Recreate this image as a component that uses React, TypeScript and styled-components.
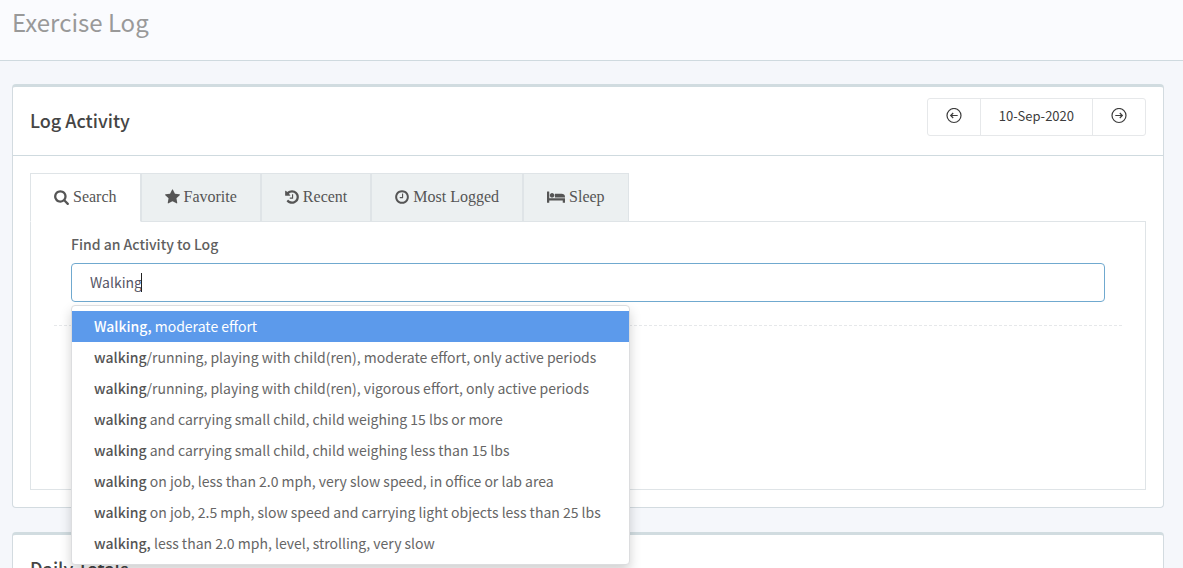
import React from "react";
import styled, { createGlobalStyle, css } from "styled-components";

const sans = `"Source Sans Pro", "Noto Sans CJK SC", sans-serif`;
const serif = `"Liberation Serif", "Times New Roman", serif`;

const GlobalStyle = createGlobalStyle`
  *, *::before, *::after { box-sizing: border-box; }
  html, body { height: 100%; overflow: hidden; }
  body {
    margin: 0;
    background: #f5f7fb;
    color: #646464;
    font-family: ${sans};
    font-size: 14px;
    line-height: 20px;
  }
`;

const PageHeader = styled.header`
  padding: 4px 12px 20px;
  background: #fafbfe;
  border-bottom: 1px solid #cfdadf;
`;

const PageTitle = styled.h1`
  margin: 0;
  color: #999;
  font-size: 24px;
  font-weight: 400;
  line-height: 36px;
`;

const Main = styled.main`
  display: flex;
  flex-direction: column;
  gap: 24px;
  padding: 23px 19px 23px 12px;
`;

const Panel = styled.section`
  background: #fff;
  border: 1px solid #d3dbe0;
  border-top: 3px solid #d1dce0;
  border-radius: 4px;
`;

const PanelHeader = styled.div`
  display: flex;
  justify-content: space-between;
  align-items: flex-start;
  min-height: 69px;
  padding: 11px 17px;
  border-bottom: 1px solid #cfdadf;
`;

const PanelTitle = styled.h2`
  margin: 0;
  color: #454545;
  font-size: 18px;
  font-weight: 500;
  line-height: 44px;
`;

const PanelBody = styled.div`
  padding: 17px;
`;

const DateGroup = styled.div`
  display: flex;
  height: 38px;
  border: 1px solid #e6e8ea;
  border-radius: 3px;
`;

const DateButton = styled.button`
  display: flex;
  align-items: center;
  justify-content: center;
  padding: 0 18px 2px;
  border: 0;
  background: none;
  color: #3c3c3c;
  font-family: ${sans};
  font-size: 13px;
  line-height: 20px;
  & + & { border-left: 1px solid #e6e8ea; }
`;

const TabList = styled.div`
  display: flex;
  margin-bottom: -1px;
`;

const Tab = styled.button<{ $active?: boolean }>`
  display: flex;
  align-items: center;
  gap: 4px;
  height: 49px;
  padding: 0 23px 2px;
  border: 1px solid #dfe4e7;
  background: #ecf0f1;
  color: #555;
  font-family: ${serif};
  font-size: 16px;
  line-height: 20px;
  white-space: nowrap;
  ${(p) =>
    p.$active &&
    css`
      background: #fff;
      border-bottom-color: #fff;
    `}
`;

const TabPanel = styled.div`
  min-height: 269px;
  padding: 12px 23px;
  border: 1px solid #dfe4e7;
`;

const SearchForm = styled.form`
  position: relative;
  margin: 0;
  padding: 0 17px 23px;
  border-bottom: 1px dashed #e6e8ea;
`;

const Label = styled.label`
  display: block;
  margin-bottom: 9px;
  color: #606060;
  font-size: 14px;
  font-weight: 500;
  line-height: 20px;
`;

const Field = styled.div`
  position: relative;
`;

const SearchInput = styled.input`
  display: block;
  width: 100%;
  height: 39px;
  padding: 0 18px 2px;
  border: 1px solid #70a9cf;
  border-radius: 4px;
  outline: 0;
  background: #fff;
  color: #555566;
  font-family: ${sans};
  font-size: 14px;
`;

const Caret = styled.span`
  position: absolute;
  top: 10px;
  left: 70px;
  width: 1px;
  height: 19px;
  background: #222;
`;

const Menu = styled.ul`
  position: absolute;
  z-index: 2;
  top: 100%;
  left: 0;
  min-width: 559px;
  margin: 3px 0 0;
  padding: 5px 0;
  border: 1px solid #dcdddf;
  border-radius: 4px;
  background: #fff;
  box-shadow: 0 6px 12px rgba(0, 0, 0, 0.18);
  list-style: none;
`;

const Option = styled.li<{ $active?: boolean }>`
  padding: 4px 22px;
  color: ${(p) => (p.$active ? "#fff" : "#666")};
  background: ${(p) => (p.$active ? "#5c9aeb" : "none")};
  line-height: 23px;
  white-space: nowrap;
  b { font-weight: 500; color: ${(p) => (p.$active ? "#fff" : "#555")}; }
`;

type GlyphProps = { width: number; box: string; d: string };

const Glyph = ({ width, box, d }: GlyphProps) => (
  <svg width={width} height="16" viewBox={box} fill="currentColor" aria-hidden="true">
    <path d={d} />
  </svg>
);

const CircleArrow = ({ back }: { back?: boolean }) => (
  <svg width="16" height="16" viewBox="0 0 16 16" fill="none" stroke="currentColor" aria-hidden="true">
    <circle cx="8" cy="7.5" r="7" strokeWidth="1.2" />
    <path
      strokeWidth="1.2"
      d={back ? "M11.7 7.5H4.8M7.2 5L4.7 7.5l2.5 2.5" : "M4.3 7.5h6.9M8.8 5l2.5 2.5-2.5 2.5"}
    />
  </svg>
);

const tabs = [
  {
    label: "Search",
    width: 15,
    box: "64 0 1664 1792",
    d: "M1216 832q0-185-131.5-316.5t-316.5-131.5-316.5 131.5-131.5 316.5 131.5 316.5 316.5 131.5 316.5-131.5 131.5-316.5zm512 832q0 52-38 90t-90 38q-54 0-90-38l-343-342q-179 124-399 124-143 0-273.5-55.5t-225-150-150-225-55.5-273.5 55.5-273.5 150-225 225-150 273.5-55.5 273.5 55.5 225 150 150 225 55.5 273.5q0 220-124 399l343 343q37 37 37 90z",
  },
  {
    label: "Favorite",
    width: 15,
    box: "64 0 1664 1792",
    d: "M1728 647q0 22-26 48l-363 354 86 500q1 7 1 20 0 21-10.5 35.5t-30.5 14.5q-19 0-40-12l-449-236-449 236q-22 12-40 12-21 0-31.5-14.5t-10.5-35.5q0-6 2-20l86-500-364-354q-25-27-25-48 0-37 56-46l502-73 225-455q19-41 49-41t49 41l225 455 502 73q56 9 56 46z",
  },
  {
    label: "Recent",
    width: 14,
    box: "128 0 1536 1792",
    d: "M1664 896q0 156-61 298t-164 245-245 164-298 61q-172 0-327-72.5t-264-204.5q-7-10-6.5-22.5t8.5-20.5l137-138q10-9 25-9 16 2 23 12 73 95 179 147t225 52q104 0 198.5-40.5t163.5-109.5 109.5-163.5 40.5-198.5-40.5-198.5-109.5-163.5-163.5-109.5-198.5-40.5q-98 0-188 35.5t-160 101.5l137 138q31 30 14 69-17 40-59 40h-448q-26 0-45-19t-19-45v-448q0-42 40-59 39-17 69 14l130 129q107-101 244.5-156.5t284.5-55.5q156 0 298 61t245 164 164 245 61 298zm-640-288v448q0 14-9 23t-23 9h-320q-14 0-23-9t-9-23v-64q0-14 9-23t23-9h224v-352q0-14 9-23t23-9h64q14 0 23 9t9 23z",
  },
  {
    label: "Most Logged",
    width: 14,
    box: "128 0 1536 1792",
    d: "M1024 544v448q0 14-9 23t-23 9h-320q-14 0-23-9t-9-23v-64q0-14 9-23t23-9h224v-352q0-14 9-23t23-9h64q14 0 23 9t9 23zm416 352q0-148-73-273t-198-198-273-73-273 73-198 198-73 273 73 273 198 198 273 73 273-73 198-198 73-273zm224 0q0 209-103 385.5t-279.5 279.5-385.5 103-385.5-103-279.5-279.5-103-385.5 103-385.5 279.5-279.5 385.5-103 385.5 103 279.5 279.5 103 385.5z",
  },
  {
    label: "Sleep",
    width: 18,
    box: "0 0 2048 1792",
    d: "M256 1024h1728q26 0 45 19t19 45v448h-256v-256h-1536v256h-256v-1216q0-26 19-45t45-19h128q26 0 45 19t19 45v704zm576-320q0-106-75-181t-181-75-181 75-75 181 75 181 181 75 181-75 75-181zm1216 256v-64q0-159-112.5-271.5t-271.5-112.5h-704q-26 0-45 19t-19 45v384h1152z",
  },
];

const options: [string, string][] = [
  ["Walking,", " moderate effort"],
  ["walking", "/running, playing with child(ren), moderate effort, only active periods"],
  ["walking", "/running, playing with child(ren), vigorous effort, only active periods"],
  ["walking", " and carrying small child, child weighing 15 lbs or more"],
  ["walking", " and carrying small child, child weighing less than 15 lbs"],
  ["walking", " on job, less than 2.0 mph, very slow speed, in office or lab area"],
  ["walking", " on job, 2.5 mph, slow speed and carrying light objects less than 25 lbs"],
  ["walking,", " less than 2.0 mph, level, strolling, very slow"],
];

export default function App() {
  const [active, setActive] = React.useState(0);
  const [query, setQuery] = React.useState("Walking");

  return (
    <>
      <GlobalStyle />
      <PageHeader>
        <PageTitle>Exercise Log</PageTitle>
      </PageHeader>
      <Main>
        <Panel>
          <PanelHeader>
            <PanelTitle>Log Activity</PanelTitle>
            <DateGroup>
              <DateButton type="button" aria-label="Previous day">
                <CircleArrow back />
              </DateButton>
              <DateButton type="button">10-Sep-2020</DateButton>
              <DateButton type="button" aria-label="Next day">
                <CircleArrow />
              </DateButton>
            </DateGroup>
          </PanelHeader>
          <PanelBody>
            <TabList role="tablist">
              {tabs.map((tab, i) => (
                <Tab
                  key={tab.label}
                  type="button"
                  role="tab"
                  aria-selected={i === active}
                  $active={i === active}
                  onClick={() => setActive(i)}
                >
                  <Glyph width={tab.width} box={tab.box} d={tab.d} />
                  {tab.label}
                </Tab>
              ))}
            </TabList>
            <TabPanel role="tabpanel">
              <SearchForm onSubmit={(e) => e.preventDefault()}>
                <Label htmlFor="activity">Find an Activity to Log</Label>
                <Field>
                  <SearchInput
                    id="activity"
                    type="text"
                    autoComplete="off"
                    value={query}
                    onChange={(e) => setQuery(e.target.value)}
                  />
                  <Caret />
                  <Menu role="listbox">
                    {options.map(([match, rest], i) => (
                      <Option key={match + rest} role="option" aria-selected={i === 0} $active={i === 0}>
                        <b>{match}</b>
                        {rest}
                      </Option>
                    ))}
                  </Menu>
                </Field>
              </SearchForm>
            </TabPanel>
          </PanelBody>
        </Panel>
        <Panel>
          <PanelHeader>
            <PanelTitle>Daily Totals</PanelTitle>
          </PanelHeader>
        </Panel>
      </Main>
    </>
  );
}
